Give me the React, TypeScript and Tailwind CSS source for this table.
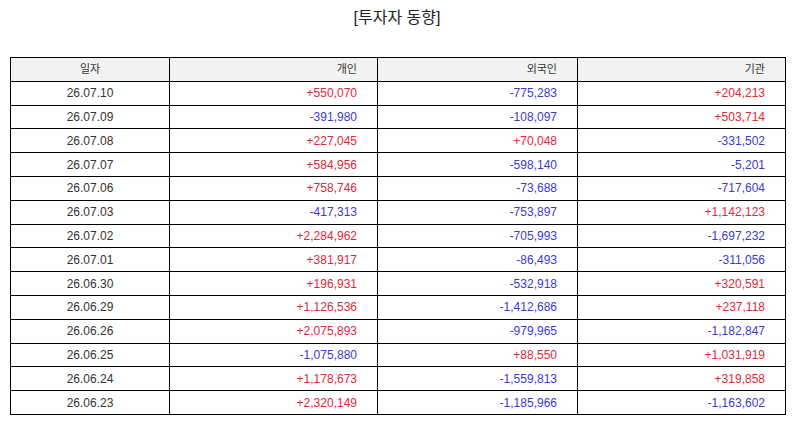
const rows: [string, string, string, string][] = [
  ["26.07.10", "+550,070", "-775,283", "+204,213"],
  ["26.07.09", "-391,980", "-108,097", "+503,714"],
  ["26.07.08", "+227,045", "+70,048", "-331,502"],
  ["26.07.07", "+584,956", "-598,140", "-5,201"],
  ["26.07.06", "+758,746", "-73,688", "-717,604"],
  ["26.07.03", "-417,313", "-753,897", "+1,142,123"],
  ["26.07.02", "+2,284,962", "-705,993", "-1,697,232"],
  ["26.07.01", "+381,917", "-86,493", "-311,056"],
  ["26.06.30", "+196,931", "-532,918", "+320,591"],
  ["26.06.29", "+1,126,536", "-1,412,686", "+237,118"],
  ["26.06.26", "+2,075,893", "-979,965", "-1,182,847"],
  ["26.06.25", "-1,075,880", "+88,550", "+1,031,919"],
  ["26.06.24", "+1,178,673", "-1,559,813", "+319,858"],
  ["26.06.23", "+2,320,149", "-1,185,966", "-1,163,602"],
];

const Num = ({ v }: { v: string }) => (
  <td
    className={
      "border border-black pr-[20px] text-right " +
      (v.startsWith("-") ? "text-[#3a3ad0]" : "text-[#e0283a]")
    }
  >
    {v}
  </td>
);

export default function App() {
  return (
    <div
      className="w-[794px] h-[425px] bg-white px-[10px] text-[#333]"
      style={{ fontFamily: '"Liberation Sans", "Noto Sans CJK KR", sans-serif' }}
    >
      <h1 className="pt-[6px] text-center text-[16px] leading-[24px] text-[#222]">
        [투자자 동향]
      </h1>
      <table className="mt-[27px] w-[775px] border-collapse table-fixed text-[12px]">
        <colgroup>
          <col className="w-[159px]" />
          <col className="w-[208px]" />
          <col className="w-[200px]" />
          <col className="w-[208px]" />
        </colgroup>
        <thead>
          <tr className="h-[23.8px] bg-[#f2f2f2] text-[11px]">
            <th className="border border-black text-center font-normal">일자</th>
            <th className="border border-black pr-[20px] text-right font-normal">개인</th>
            <th className="border border-black pr-[20px] text-right font-normal">외국인</th>
            <th className="border border-black pr-[20px] text-right font-normal">기관</th>
          </tr>
        </thead>
        <tbody>
          {rows.map((r) => (
            <tr key={r[0]} className="h-[23.8px]">
              <td className="border border-black text-center">{r[0]}</td>
              <Num v={r[1]} />
              <Num v={r[2]} />
              <Num v={r[3]} />
            </tr>
          ))}
        </tbody>
      </table>
    </div>
  );
}
